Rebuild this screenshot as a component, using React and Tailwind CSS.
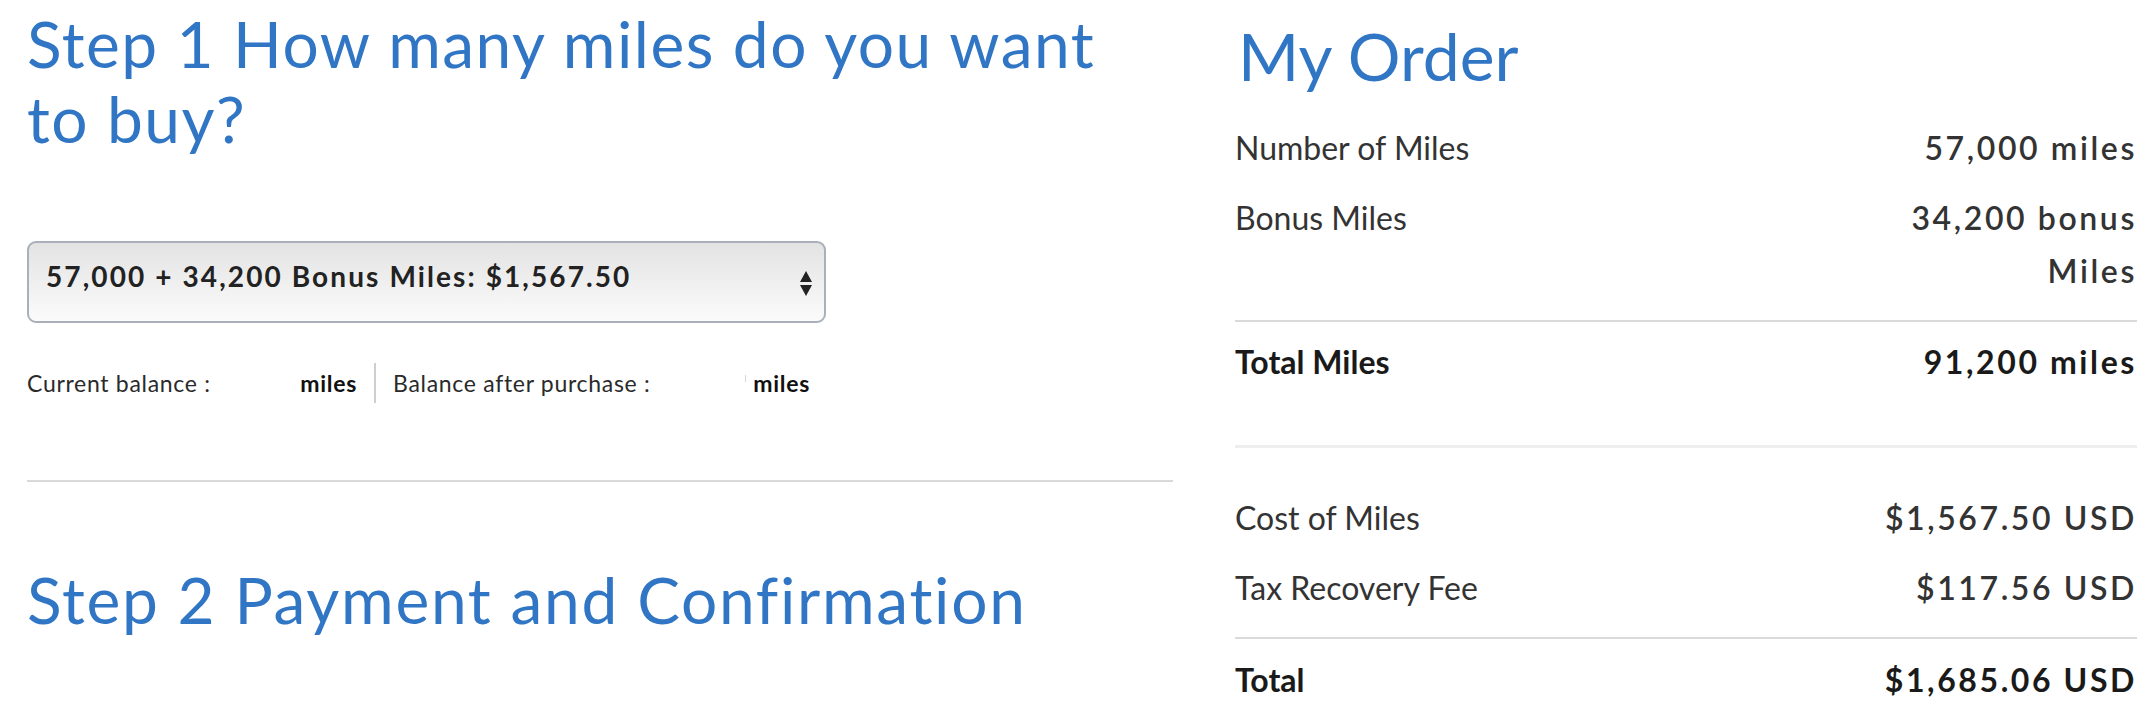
const orderRows = [
  { label: 'Number of Miles', value: '57,000 miles' },
  { label: 'Bonus Miles', value: '34,200 bonus Miles' },
];

const costRows = [
  { label: 'Cost of Miles', value: '$1,567.50 USD' },
  { label: 'Tax Recovery Fee', value: '$117.56 USD' },
];

function Row({ label, value, bold, className = '' }) {
  return (
    <div className={`flex justify-between leading-[53px] ${className}`}>
      <span className={bold ? 'font-bold text-[#1a1a1a]' : 'text-[#333]'}>{label}</span>
      <span
        className={`w-[270px] text-right tracking-[2.6px] ${bold ? 'font-bold text-[#1a1a1a]' : 'font-semibold text-[#333]'}`}
      >
        {value}
      </span>
    </div>
  );
}

export default function App() {
  return (
    <div className="flex w-[2154px] h-[708px] overflow-hidden bg-white font-['Lato',sans-serif]">
      {/* left column */}
      <div className="ml-[27px] w-[1147px]">
        <h1 className="mt-[6px] text-[64px] leading-[75px] tracking-[1.5px] text-[#3076c5] font-normal">
          Step 1 How many miles do you want
          <br />
          to buy?
        </h1>

        <div className="mt-[85px] w-[799px] h-[82px] rounded-[9px] border-2 border-[#a9b0ba] bg-linear-to-b from-[#e3e3e3] to-[#fbfbfb] flex justify-between pl-[17px] pr-[12px] pt-[19px]">
          <span className="text-[28px] leading-[28px] tracking-[2.1px] font-bold text-[#222]">
            57,000 + 34,200 Bonus Miles: $1,567.50
          </span>
          <svg width="12" height="25" viewBox="0 0 12 25" className="mt-[9px]">
            <polygon points="6,0 12,11 0,11" fill="#222" />
            <polygon points="0,14 12,14 6,25" fill="#222" />
          </svg>
        </div>

        <div className="mt-[40px] flex items-center text-[23px] tracking-[0.7px] text-[#2a2a2a]">
          <div className="w-[330px] flex justify-between">
            <span>Current balance :</span>
            <span className="font-bold text-[#111]">miles</span>
          </div>
          <div className="ml-[17px] w-[2px] h-[40px] bg-[#cfcfcf]" />
          <div className="ml-[17px] w-[417px] flex justify-between items-center">
            <span>Balance after purchase :</span>
            <span className="flex items-center">
              <span className="w-[1px] h-[7px] bg-[#d6d6d6] mr-[7px] -mt-[10px]" />
              <span className="font-bold text-[#111]">miles</span>
            </span>
          </div>
        </div>

        <div className="mt-[77px] h-[2px] w-[1146px] bg-[#d9d9d9]" />

        <h2 className="mt-[80px] text-[64px] leading-[75px] tracking-[1.7px] text-[#3076c5] font-normal">
          Step 2 Payment and Confirmation
        </h2>
      </div>

      {/* right column: order summary */}
      <div className="ml-[61px] w-[902px] text-[32px]">
        <h2 className="mt-[18px] ml-[3px] text-[66px] leading-[75px] text-[#3076c5] font-normal">My Order</h2>

        <div className="mt-[28px] flex flex-col gap-[17px]">
          {orderRows.map((row) => (
            <Row key={row.label} {...row} />
          ))}
        </div>

        <div className="mt-[23px] h-[2px] bg-[#dadada]" />
        <Row className="mt-[13px]" label="Total Miles" value="91,200 miles" bold />
        <div className="mt-[57px] h-[3px] bg-[#eeeeee]" />

        <div className="mt-[43px] flex flex-col gap-[17px]">
          {costRows.map((row) => (
            <Row key={row.label} {...row} />
          ))}
        </div>

        <div className="mt-[23px] h-[2px] bg-[#dadada]" />
        <Row className="mt-[14px]" label="Total" value="$1,685.06 USD" bold />
      </div>
    </div>
  );
}
